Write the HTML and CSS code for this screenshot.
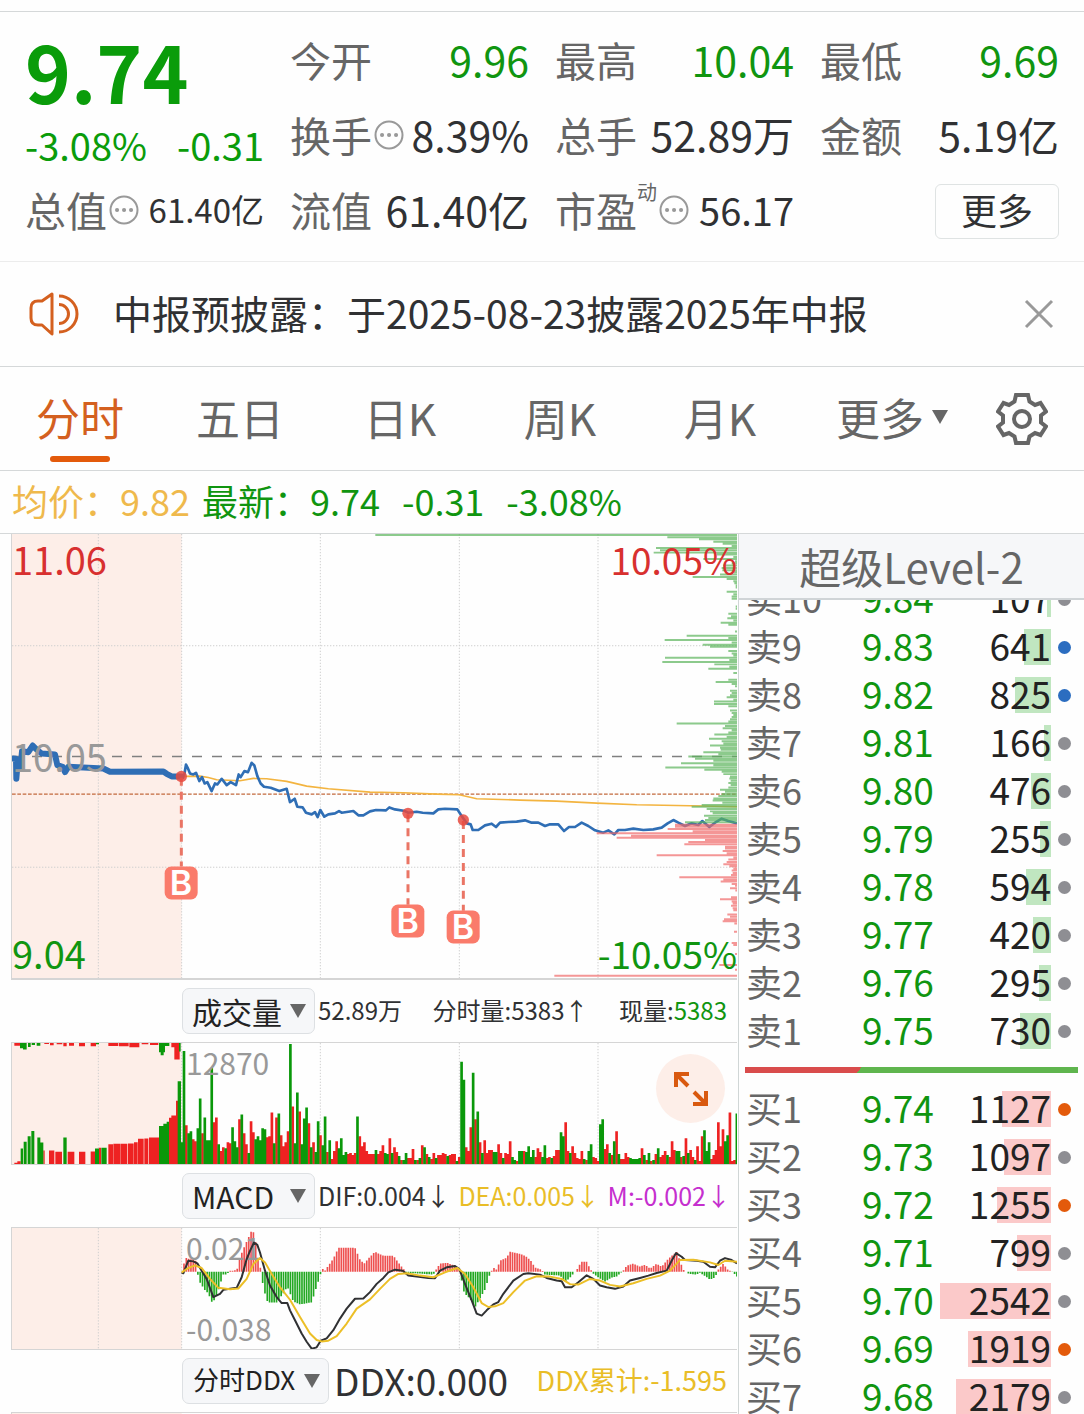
FILE: index.html
```html
<!DOCTYPE html>
<html lang="zh-CN">
<head>
    <meta charset="UTF-8">
    <meta name="viewport" content="width=device-width, initial-scale=1.0">
    <title>分时行情</title>
    <link rel="stylesheet" href="styles.css">
</head>
<body>
<main class="page">

    <section class="quote">
        <div class="last">
            <strong class="last-price">9.74</strong>
            <div class="last-change"><span>-3.08%</span><span>-0.31</span></div>
        </div>
        <div class="item"><span class="name">今开</span><span class="value down">9.96</span></div>
        <div class="item"><span class="name">最高</span><span class="value down">10.04</span></div>
        <div class="item"><span class="name">最低</span><span class="value down">9.69</span></div>
        <div class="item">
            <span class="name">换手</span>
            <svg class="tip" viewBox="0 0 30 30"><circle cx="15" cy="15" r="13.5"/><path d="M8 15h.1M15 15h.1M22 15h.1"/></svg>
            <span class="value">8.39%</span>
        </div>
        <div class="item"><span class="name">总手</span><span class="value">52.89万</span></div>
        <div class="item"><span class="name">金额</span><span class="value">5.19亿</span></div>
        <div class="item">
            <span class="name">总值</span>
            <svg class="tip" viewBox="0 0 30 30"><circle cx="15" cy="15" r="13.5"/><path d="M8 15h.1M15 15h.1M22 15h.1"/></svg>
            <span class="value small">61.40亿</span>
        </div>
        <div class="item"><span class="name">流值</span><span class="value">61.40亿</span></div>
        <div class="item">
            <span class="name">市盈<sup>动</sup></span>
            <svg class="tip" viewBox="0 0 30 30"><circle cx="15" cy="15" r="13.5"/><path d="M8 15h.1M15 15h.1M22 15h.1"/></svg>
            <span class="value medium">56.17</span>
        </div>
        <div class="item"><button class="more" type="button">更多</button></div>
    </section>

    <section class="notice">
        <svg class="speaker" viewBox="0 0 52 46">
            <path d="M23 3L13 10H9Q2 10 2 17V27Q2 34 9 34H13L23 43Z"/>
            <path d="M30 5A18 18 0 0 1 30 41M30 13.500A9.500 9.500 0 0 1 30 32.500"/>
        </svg>
        <p>中报预披露：于2025-08-23披露2025年中报</p>
        <button class="close" type="button" aria-label="关闭">
            <svg viewBox="0 0 30 30"><path d="M2 2L28 28M28 2L2 28"/></svg>
        </button>
    </section>

    <nav class="tabs">
        <button type="button" class="tab active">分时</button>
        <button type="button" class="tab">五日</button>
        <button type="button" class="tab">日K</button>
        <button type="button" class="tab">周K</button>
        <button type="button" class="tab">月K</button>
        <button type="button" class="tab tab-more">更多<svg class="caret" viewBox="0 0 16 14"><path d="M0 0H16L8 14Z"/></svg></button>
        <button type="button" class="settings" aria-label="设置">
            <svg viewBox="0 0 52 52">
                <path d="M20 2H32L33.500 8.500L39 12L44.500 10L50 18.500L45 22.500V29.500L50 33.500L44.500 42L39 40L33.500 43.500L32 50H20L18.500 43.500L13 40L7.500 42L2 33.500L7 29.500V22.500L2 18.500L7.500 10L13 12L18.500 8.500Z"/>
                <circle cx="26" cy="26" r="8"/>
            </svg>
        </button>
    </nav>

    <div class="summary">
        <span class="average">均价：9.82</span>
        <span>最新：9.74</span>
        <span>-0.31</span>
        <span>-3.08%</span>
    </div>

    <div class="board">
        <section class="charts">
            <div class="chart chart-price">
                <svg id="price" viewBox="36 12 2175 1335" preserveAspectRatio="none">
                    <rect class="preopen" x="36" y="12" width="509" height="1335"/>
                    <path class="grid" d="M295 12V1347M545 12V1347M961 12V1347M1378 12V1347M1794 12V1347M36 348H2211M36 1014H2211"/>
                    <path class="prev-close" d="M36 681H2211"/>
                    <path class="cost" d="M36 794H2211"/>
                    <polyline class="avg-line" points="545,741 600,740 625,744 650,751 720,754 760,747 800,748 860,756 920,770 985,778 1110,788 1210,790 1310,794 1378,796 1430,808 1560,812 1670,815 1790,821 1910,826 2070,829 2211,832"/>
                    <polyline class="price-line early" points="40,687 48,688 49,748 52,712 62,712 66,665 85,668 98,648 110,660 125,672 165,675 172,707 188,712 195,728 205,712 310,717 330,727 490,726 500,733 515,741 545,741"/>
                    <polyline class="price-line" points="545,741 553,735 558,705 563,715 570,732 580,735 588,730 598,755 606,743 614,762 622,758 635,785 645,762 652,765 665,748 680,767 692,758 708,767 716,735 722,743 733,725 744,728 755,700 763,708 772,740 782,762 792,772 812,775 838,785 860,778 870,818 884,808 892,832 908,834 918,850 935,855 945,848 953,863 961,842 973,862 985,855 1005,852 1017,845 1025,850 1060,845 1075,858 1090,858 1110,846 1128,842 1158,843 1168,834 1185,840 1215,845 1224,850 1250,847 1268,850 1300,852 1315,840 1335,838 1372,840 1385,860 1400,882 1412,885 1418,902 1435,902 1455,888 1475,883 1488,893 1500,880 1525,878 1550,877 1575,873 1595,880 1615,880 1635,890 1650,885 1675,885 1692,905 1707,893 1725,893 1745,880 1765,890 1785,903 1810,910 1825,903 1843,915 1855,902 1875,902 1900,898 1930,902 1960,900 1985,895 2003,882 2020,872 2035,880 2055,890 2075,882 2095,887 2107,875 2128,893 2145,880 2165,868 2185,875 2211,882"/>
                    <g class="trades">
                        <path d="M544 745V1012M1224 855V1127M1390 875V1145"/>
                        <circle cx="544" cy="741" r="17"/>
                        <circle cx="1224" cy="852" r="17"/>
                        <circle cx="1390" cy="872" r="17"/>
                        <rect x="494" y="1012" width="99" height="99" rx="20"/>
                        <rect x="1174" y="1126" width="99" height="99" rx="20"/>
                        <rect x="1340" y="1144" width="99" height="99" rx="20"/>
                        <text x="543" y="1098">B</text>
                        <text x="1223" y="1212">B</text>
                        <text x="1389" y="1230">B</text>
                    </g>
                </svg>
                <div class="scale">
                    <span class="up">11.06</span><span class="flat">10.05</span><span class="down">9.04</span>
                </div>
                <div class="scale scale-right">
                    <span class="up">10.05%</span><span class="down">-10.05%</span>
                </div>
            </div>

            <div class="bar">
                <label class="picker">
                    <select aria-label="成交量指标"><option>成交量</option></select>
                    <svg class="caret" viewBox="0 0 16 14"><path d="M0 0H16L8 14Z"/></svg>
                </label>
                <div class="stats">
                    <span>52.89万</span>
                    <span>分时量:5383↑</span>
                    <span>现量:<b class="down">5383</b></span>
                </div>
            </div>

            <div class="chart chart-sub">
                <svg id="volume" viewBox="36 186 2175 366" preserveAspectRatio="none">
                    <rect class="preopen" x="36" y="186" width="509" height="366"/>
                    <path class="grid" d="M295 186V552M545 186V552M961 186V552M1378 186V552M1794 186V552"/>
                </svg>
                <div class="scale scale-inner"><span class="flat">12870</span></div>
                <button class="expand" type="button" aria-label="放大">
                    <svg viewBox="0 0 34 34"><path d="M2 15V2H15M2 2L14 14M32 19V32H19M32 32L20 20"/></svg>
                </button>
            </div>

            <div class="bar">
                <label class="picker">
                    <select aria-label="MACD指标"><option>MACD</option></select>
                    <svg class="caret" viewBox="0 0 16 14"><path d="M0 0H16L8 14Z"/></svg>
                </label>
                <div class="stats stats-tight">
                    <span>DIF:0.004↓</span>
                    <span class="yellow">DEA:0.005↓</span>
                    <span class="purple">M:-0.002↓</span>
                </div>
            </div>

            <div class="chart chart-sub">
                <svg id="macd" viewBox="36 171 2175 366" preserveAspectRatio="none">
                    <rect class="preopen" x="36" y="171" width="509" height="366"/>
                    <path class="grid" d="M295 171V537M545 171V537M961 171V537M1378 171V537M1794 171V537"/>
                </svg>
                <div class="scale scale-inner"><span class="flat">0.021</span><span class="flat">-0.038</span></div>
                <svg class="over" viewBox="36 171 2175 366" preserveAspectRatio="none">
                    <polyline class="dif" points="545,305 550,308 565,270 580,272 592,278 605,300 620,325 640,380 660,370 670,358 690,355 710,352 725,320 740,265 750,240 762,215 772,222 780,245 795,300 810,345 830,380 845,398 862,398 870,420 885,450 905,490 920,515 935,536 950,532 962,512 980,505 1000,480 1020,445 1040,415 1065,385 1090,384 1110,365 1130,340 1150,322 1165,305 1185,297 1208,300 1225,315 1250,318 1285,322 1305,323 1320,300 1340,290 1365,286 1378,295 1395,340 1415,390 1430,430 1445,436 1460,420 1480,402 1495,395 1510,370 1540,330 1570,310 1585,308 1620,312 1640,322 1670,330 1685,332 1695,350 1715,350 1735,335 1760,314 1780,325 1800,345 1820,350 1845,355 1870,348 1890,330 1920,322 1945,315 1970,307 2000,300 2015,270 2028,247 2045,258 2055,268 2090,270 2110,273 2130,288 2145,290 2160,270 2175,262 2195,268 2211,278"/>
                    <polyline class="dea" points="545,305 565,292 585,284 605,292 630,325 655,352 690,356 715,354 740,325 760,280 780,262 795,275 815,310 840,350 870,388 900,440 930,490 950,510 965,514 985,512 1010,498 1040,460 1070,415 1110,387 1140,355 1170,325 1195,310 1220,308 1260,315 1300,320 1335,305 1372,292 1395,310 1420,350 1445,398 1465,410 1485,408 1510,398 1540,365 1575,330 1610,317 1650,318 1685,325 1710,341 1735,342 1770,325 1800,330 1830,343 1860,348 1900,338 1940,325 1980,315 2010,300 2040,268 2080,267 2130,275 2155,283 2175,270 2211,273"/>
                </svg>
            </div>

            <div class="bar">
                <label class="picker picker-wide">
                    <select aria-label="分时DDX指标"><option>分时DDX</option></select>
                    <svg class="caret" viewBox="0 0 16 14"><path d="M0 0H16L8 14Z"/></svg>
                </label>
                <div class="stats">
                    <span class="ddx">DDX:0.000</span>
                    <span class="ddx-sum yellow">DDX累计:-1.595</span>
                </div>
            </div>
            <div class="chart chart-sub">
                <svg viewBox="36 0 2175 366" preserveAspectRatio="none"><rect class="preopen" x="36" y="0" width="509" height="366"/></svg>
            </div>
        </section>

        <section class="book">
            <h2>超级Level-2</h2>
            <table class="asks">
                <tr><th>卖10</th><td>9.84</td><td><i style="width:4px"></i>107</td><td class="dot"></td></tr>
                <tr><th>卖9</th><td>9.83</td><td><i style="width:27px"></i>641</td><td class="dot blue"></td></tr>
                <tr><th>卖8</th><td>9.82</td><td><i style="width:36px"></i>825</td><td class="dot blue"></td></tr>
                <tr><th>卖7</th><td>9.81</td><td><i style="width:7px"></i>166</td><td class="dot"></td></tr>
                <tr><th>卖6</th><td>9.80</td><td><i style="width:20px"></i>476</td><td class="dot"></td></tr>
                <tr><th>卖5</th><td>9.79</td><td><i style="width:11px"></i>255</td><td class="dot"></td></tr>
                <tr><th>卖4</th><td>9.78</td><td><i style="width:25px"></i>594</td><td class="dot"></td></tr>
                <tr><th>卖3</th><td>9.77</td><td><i style="width:18px"></i>420</td><td class="dot"></td></tr>
                <tr><th>卖2</th><td>9.76</td><td><i style="width:12px"></i>295</td><td class="dot"></td></tr>
                <tr><th>卖1</th><td>9.75</td><td><i style="width:31px"></i>730</td><td class="dot"></td></tr>
            </table>
            <div class="ratio"></div>
            <table class="bids">
                <tr><th>买1</th><td>9.74</td><td><i style="width:49px"></i>1127</td><td class="dot orange"></td></tr>
                <tr><th>买2</th><td>9.73</td><td><i style="width:47px"></i>1097</td><td class="dot"></td></tr>
                <tr><th>买3</th><td>9.72</td><td><i style="width:54px"></i>1255</td><td class="dot orange"></td></tr>
                <tr><th>买4</th><td>9.71</td><td><i style="width:34px"></i>799</td><td class="dot"></td></tr>
                <tr><th>买5</th><td>9.70</td><td><i style="width:111px"></i>2542</td><td class="dot"></td></tr>
                <tr><th>买6</th><td>9.69</td><td><i style="width:83px"></i>1919</td><td class="dot orange"></td></tr>
                <tr><th>买7</th><td>9.68</td><td><i style="width:95px"></i>2179</td><td class="dot"></td></tr>
            </table>
        </section>
    </div>
</main>
<script src="charts.js"></script>
</body>
</html>
```
FILE: styles.css
```css
* {
    box-sizing: border-box;
}

body {
    margin: 0;
    background-color: #fefefe;
    color: #303133;
    font-family: "Noto Sans CJK SC", "Noto Sans", sans-serif;
}

button {
    padding: 0;
    border: none;
    background: none;
    color: inherit;
    font-family: inherit;
    cursor: pointer;
}

svg {
    display: block;
    fill: none;
}

.page {
    height: 100vh;
    padding-top: 11px;
    overflow: hidden;
}

.up {
    color: #d8302f;
}

.down {
    color: #109510;
}

.flat {
    color: #999;
}

.yellow {
    color: #e9bd27;
}

.purple {
    color: #c52fce;
}

/* quote header */
.quote {
    display: grid;
    grid-template-columns: repeat(4, minmax(0, 1fr));
    grid-auto-rows: 75px;
    column-gap: 26px;
    padding: 12px 25px;
    border-top: 1px solid #d5d8d9;
    border-bottom: 1px solid #ececec;
    font-size: 41px;
    white-space: nowrap;
}

.last {
    grid-row: span 2;
    color: #0a9c0a;
}

.last-price {
    display: block;
    font-size: 78px;
    line-height: 92px;
}

.last-change {
    display: flex;
    justify-content: space-between;
    font-size: 38px;
    line-height: 58px;
}

.item {
    display: flex;
    align-items: center;
    padding-bottom: 4px;
    line-height: 71px;
}

.name {
    color: #666;
}

.name sup {
    font-size: 20px;
    line-height: 20px;
    vertical-align: 27px;
}

.value {
    margin-left: auto;
}

.small {
    font-size: 33px;
}

.medium {
    font-size: 38px;
}

.tip {
    width: 30px;
    height: 30px;
    margin: 0 2px;
    stroke: #999;
    stroke-width: 2;
}

.tip path {
    stroke-width: 4;
    stroke-linecap: round;
}

.more {
    width: 124px;
    height: 55px;
    margin-top: 3px;
    margin-left: auto;
    padding-bottom: 4px;
    border: 1px solid #dfe3e3;
    border-radius: 6px;
    font-size: 36px;
    line-height: 48px;
}

/* notice */
.notice {
    display: flex;
    align-items: center;
    height: 105px;
    padding: 0 30px 0 29px;
    border-bottom: 1px solid #d5d8d9;
    font-size: 39px;
}

.notice p {
    flex: 1;
    margin: 0 0 0 32px;
    padding-bottom: 5px;
    line-height: 60px;
}

.speaker {
    width: 52px;
    height: 46px;
    stroke: #d4601f;
    stroke-width: 3;
    stroke-linejoin: round;
}

.close svg {
    width: 30px;
    height: 30px;
    stroke: #999;
    stroke-width: 3;
}

/* period tabs */
.tabs {
    display: grid;
    grid-template-columns: repeat(6, minmax(0, 160fr)) minmax(0, 124fr);
    height: 104px;
    border-bottom: 1px solid #d5d8d9;
    color: #666;
}

.tab {
    position: relative;
    padding-bottom: 4px;
    font-size: 44px;
    line-height: 64px;
}

.tab.active {
    color: #d4601f;
}

.tab.active::after {
    content: "";
    position: absolute;
    left: 50%;
    bottom: 8px;
    width: 60px;
    height: 6px;
    margin-left: -30px;
    border-radius: 3px;
    background-color: #e35a0b;
}

.tab-more {
    display: flex;
    align-items: center;
    justify-content: center;
    gap: 8px;
    padding-left: 24px;
}

.caret {
    width: 16px;
    height: 14px;
    fill: #666;
}

.settings svg {
    width: 52px;
    height: 52px;
    margin: 0 auto;
    stroke: #666;
    stroke-width: 4;
}

.summary {
    display: flex;
    gap: 22px;
    padding: 0 12px 4px;
    border-bottom: 1px solid #d5d8d9;
    color: #109510;
    font-size: 36px;
    line-height: 58px;
}

.average {
    margin-right: -10px;
    color: #efb94c;
}

/* charts on the left, order book on the right */
.board {
    display: grid;
    grid-template-columns: minmax(0, 739fr) minmax(0, 345fr);
}

.charts {
    padding: 0 1px 0 11px;
    border-right: 1px solid #d0d6d6;
}

.chart {
    position: relative;
    border-left: 1px solid #d5d5d5;
    border-bottom: 1px solid #d5d5d5;
}

.chart svg {
    width: 100%;
    height: 100%;
}

.chart-price {
    height: 446px;
    border-bottom-width: 2px;
}

.chart-sub {
    height: 123px;
    border-top: 1px solid #d5d5d5;
}

.preopen {
    fill: #fdeee8;
}

.grid {
    stroke: #cfcfcf;
    stroke-width: 3;
    stroke-dasharray: 4 5;
}

.prev-close {
    stroke: #808080;
    stroke-width: 5;
    stroke-dasharray: 30 30;
}

.cost {
    stroke: #c2693c;
    stroke-width: 4;
    stroke-dasharray: 11 5;
}

.avg-line {
    stroke: #f3b440;
    stroke-width: 5;
}

.price-line {
    stroke: #2f6eb5;
    stroke-width: 8;
    stroke-linejoin: round;
}

.price-line.early {
    stroke-width: 18;
    stroke-linecap: round;
}

.trades path {
    stroke: #ea7565;
    stroke-width: 9;
    stroke-dasharray: 24 18;
}

.trades circle {
    fill: #e84a3f;
    opacity: 0.85;
}

.trades rect {
    fill: #fa7b6b;
}

.trades text {
    fill: #fff;
    font-family: Inter, sans-serif;
    font-size: 102px;
    font-weight: 600;
    text-anchor: middle;
}

.depth {
    stroke-width: 6;
    opacity: 0.7;
}

.depth.sell {
    stroke: #5bb45b;
}

.depth.buy {
    stroke: #ef6a6a;
}

.vol-up {
    fill: #ee2222;
}

.vol-down {
    fill: #0a980a;
}

.macd-up,
.macd-down {
    stroke-width: 5;
    stroke: #ee5050;
}

.macd-down {
    stroke: #22a822;
}

.dif,
.dea {
    stroke: #303133;
    stroke-width: 6;
    stroke-linejoin: round;
}

.dea {
    stroke: #ecbf27;
}

.over {
    position: absolute;
    inset: 0;
}

.scale {
    position: absolute;
    inset: 0;
    display: flex;
    flex-direction: column;
    justify-content: space-between;
    font-size: 38px;
    line-height: 50px;
}

.scale-right {
    font-size: 37px;
    text-align: right;
}

.scale-inner {
    left: 24%;
    padding-bottom: 2px;
    font-size: 30px;
    line-height: 38px;
}

.expand {
    position: absolute;
    top: 11px;
    right: 12px;
    width: 69px;
    height: 69px;
    border-radius: 50%;
    background-color: #fdeee8;
}

.expand svg {
    width: 34px;
    height: 34px;
    margin: 0 auto;
    stroke: #d9590f;
    stroke-width: 4;
}

.bar {
    display: flex;
    align-items: center;
    height: 62px;
    padding-left: 171px;
}

.picker {
    position: relative;
    flex: none;
    width: 133px;
}

.picker select {
    display: block;
    width: 100%;
    height: 46px;
    padding: 0 0 6px 9px;
    border: 1px solid #dde0e3;
    border-radius: 7px;
    background-color: #f6f7f9;
    color: #222;
    font-family: inherit;
    font-size: 30px;
    appearance: none;
}

.picker .caret {
    position: absolute;
    top: 16px;
    right: 9px;
    pointer-events: none;
}

.picker-wide {
    width: 147px;
}

.picker-wide select {
    padding-left: 10px;
    font-size: 26px;
}

.stats {
    flex: 1;
    display: flex;
    align-items: center;
    justify-content: space-between;
    padding: 0 10px 2px 3px;
    font-size: 24px;
    line-height: 44px;
    white-space: nowrap;
}

.stats b {
    font-weight: normal;
}

.stats-tight {
    padding-right: 6px;
    font-size: 25px;
}

.ddx {
    padding-left: 2px;
    font-size: 37px;
}

.ddx-sum {
    font-size: 27px;
}

/* order book */
.book h2 {
    position: relative;
    z-index: 1;
    height: 66px;
    margin: 0 0 -25px;
    border-bottom: 2px solid #d0d4d7;
    background-color: #f6f7f9;
    color: #666;
    font-size: 42px;
    font-weight: normal;
    line-height: 64px;
    text-align: center;
}

.book table {
    width: 100%;
    table-layout: fixed;
    border-collapse: collapse;
    font-size: 37px;
    line-height: 45px;
}

.book th,
.book td {
    height: 48px;
    padding: 0;
    vertical-align: top;
    white-space: nowrap;
}

.book th {
    width: 31%;
    padding-left: 7px;
    color: #666;
    font-size: 36px;
    font-weight: normal;
    text-align: left;
}

.book td:nth-child(2) {
    width: 26%;
    padding-left: 16px;
    color: #109510;
}

.book td:nth-child(3) {
    position: relative;
    color: #222;
    text-align: right;
}

.book td.dot {
    width: 33px;
    padding-left: 7px;
    vertical-align: middle;
}

.dot::before {
    content: "";
    display: block;
    width: 13px;
    height: 13px;
    border-radius: 50%;
    background-color: #8e8e93;
}

.dot.blue::before {
    background-color: #2b6dc0;
}

.dot.orange::before {
    background-color: #e35a0b;
}

.book i {
    position: absolute;
    top: 6px;
    right: 0;
    z-index: -1;
    height: 36px;
    background-color: #c0e6c0;
}

.bids i {
    background-color: #fbc9c9;
}

.ratio {
    height: 6px;
    margin: 12px 6px;
    background: linear-gradient(130deg, #d94c4c 34.500%, #5fb54e 34.500%);
}
```
FILE: charts.js
```js
const NS = 'http://www.w3.org/2000/svg';

function addPath(svg, cls, d) {
    const path = document.createElementNS(NS, 'path');
    path.setAttribute('class', cls);
    path.setAttribute('d', d);
    svg.appendChild(path);
}

// depth bars: y and left end of each price level, drawn up to the right edge
const sell = '15:16 22:892 28:987 35:1030 41:1058 48:1085 54:858 61:870 68:851 74:1040 81:1090 87:1000 94:1095 100:1085 107:1060 114:1055 121:1057 127:1092 134:1050 141:968 147:1070 154:1090 160:1093 167:1097 173:1097 186:1070 193:1090 200:1085 207:1085 230:1097 237:1097 252:1075 259:1083 265:1072 272:1090 279:1052 285:1075 305:1095 318:950 325:1075 331:884 338:1085 345:998 351:1020 364:1075 371:1085 377:1090 384:885 391:1078 397:877 404:1033 411:1078 417:1015 430:1090 450:1075 457:1037 463:1085 470:1095 483:1080 490:1085 497:1080 503:1070 510:1090 516:1032 523:1032 530:1075 543:1080 550:1085 556:1090 562:1085 569:1080 576:1075 582:920 589:1065 596:1058 602:1085 609:1075 615:1033 622:1070 628:1017 635:1055 642:1060 648:1020 655:1050 661:1052 668:1000 674:1045 681:955 688:975 694:1030 701:933 707:1030 714:886 721:1003 727:1055 734:1060 741:1080 747:1078 754:1082 761:1075 767:1082 774:1075 781:1050 787:1065 794:1055 800:1045 807:1030 813:1028 820:1057 827:995 832:965 839:1010 846:1020 852:1028 859:1002 866:1015 872:1005 879:945';
const buy = '886:915 892:915 899:893 906:968 912:680 919:783 925:740 932:1005 938:955 945:943 952:1065 958:1065 965:1058 972:1070 978:860 985:1090 991:1075 998:1070 1005:1060 1011:1078 1018:1090 1024:1085 1031:1088 1037:1083 1044:928 1051:1060 1057:1052 1064:1085 1070:1095 1077:1080 1084:1096 1104:1083 1110:1050 1117:1085 1123:1088 1130:1083 1137:1088 1143:1090 1156:1072 1163:1080 1170:1062 1176:1058 1183:1093 1208:1092 1242:1085 1248:1090 1275:1095 1308:1048 1322:1095 1340:553';

function depth(list) {
    return list.split(' ').map(p => {
        const [y, x] = p.split(':').map(Number);
        return `M${x + 1110} ${y}H2211`;
    }).join('');
}

const price = document.getElementById('price');
addPath(price, 'depth sell', depth(sell));
addPath(price, 'depth buy', depth(buy));

// call auction volume: colour, left, right, height
const auction = 'r43-52:4 r52-62:8 g62-69:47 g71-80:67 g83-92:84 g94-103:100 g112-121:80 g121-130:65 r130-134:41 r147-163:41 r166-186:37 g190-200:80 r203-223:37 r237-256:37 r272-285:38 g285-297:47 r297-303:49 g304-320:49 r325-339:60 r340-360:61 r361-382:61 r384-401:62 r402-413:66 r414-431:76 r433-445:77 r447-477:80 g477-490:115 g490-500:122 g500-507:128 r507-514:140 r514-528:147 r528-534:191 g533-543:250';
const unmatched = 'r43-60:8 g60-69:16 g69-80:20 g84-92:12 g95-105:6 g110-121:8 r133-147:3 r150-161:7 r170-187:4 r190-200:10 r207-222:8 r237-255:10 r272-288:10 g288-297:4 r325-355:9 r357-386:10 r388-418:13 r425-445:4 r450-475:6 g477-495:28 g482-491:37 g495-508:9 r514-524:13 r523-539:50 g537-542:26';
// one bar per minute
const minutes = 'g22 g114 r39 g31 g33 r25 r23 g36 g66 r31 g47 g24 g24 g97 r42 r47 g20 r13 r17 g16 r22 r21 g37 g23 g17 r45 g50 r31 r20 g11 r43 r32 g25 g28 g24 g36 g35 r27 r28 r52 g21 r47 g51 r29 r18 r22 r33 g121 r58 g21 g72 r53 g20 g46 g57 r41 g17 r22 g12 g43 r29 g19 g48 r12 g24 r5 r13 r23 g16 g26 g9 g12 r10 r11 r9 r11 g48 r28 r18 r22 r13 r10 ' +
    'r10 r10 g14 r10 r13 r19 g11 g10 r26 g11 r17 r12 g8 r4 g4 g11 r6 r6 r15 g4 r4 g6 r19 g17 r10 g7 r5 r11 g6 r9 r9 r11 r10 g8 r9 r10 r10 g3 r7 g103 g85 r17 r13 r37 g92 r45 g53 r22 g11 r24 r11 r14 r14 g12 g12 r20 r11 g6 r11 r10 r23 g7 g4 r3 g13 g13 r13 g12 g18 g7 g14 r7 r16 r12 g7 g19 r6 r7 g6 r8 r14 r14 g32 g28 r42 r13 g11 r18 r11 r6 r5 r13 g5 r4 g13 g20 r7 r6 r3 ' +
    'g40 g45 r15 r20 g11 r9 g23 r33 g10 r5 r5 r11 r7 g6 g5 g5 g5 g6 r16 g9 r4 g11 r3 g4 r10 g16 r7 r9 r13 g9 r7 r23 r14 g13 g13 r7 g8 r26 g11 r14 r7 g4 r18 r3 r28 g34 g13 g22 r5 r9 r14 r42 r18 r35 g23 g29 r52 r3 r4 g51';

const vol = { r: '', g: '' };
auction.split(' ').forEach(b => {
    const [x1, x2, h] = b.slice(1).split(/[-:]/).map(Number);
    vol[b[0]] += `M${x1} 552V${552 - h}H${x2}V552Z`;
});
unmatched.split(' ').forEach(b => {
    const [x1, x2, h] = b.slice(1).split(/[-:]/).map(Number);
    vol[b[0]] += `M${x1} 186V${186 + h}H${x2}V186Z`;
});
const step = 6.94;
minutes.split(' ').forEach((b, i) => {
    const x = 541 + i * step;
    vol[b[0]] += `M${x} 552V${552 - b.slice(1) * 3}H${x + 8}V552Z`;
});
const volume = document.getElementById('volume');
addPath(volume, 'vol-up', vol.r);
addPath(volume, 'vol-down', vol.g);

// MACD histogram: turning points, bars are interpolated between them
const hist = [[545,0],[557,14],[587,11],[594,-4],[600,-11],[613,-18],[625,-22],[636,-31],[645,-28],[660,-14],[668,-3],[680,-3],[690,1],[703,1],[712,3],[718,13],[733,25],[745,34],[757,43],[765,35],[775,10],[782,3],[786,-8],[793,-20],[803,-31],[830,-31],[850,-22],[862,-15],[880,-30],[900,-33],[935,-31],[950,-15],[961,-3],[967,3],[975,1],[985,6],[1000,13],[1015,24],[1065,24],[1080,12],[1092,8],[1110,15],[1125,20],[1150,16],[1180,16],[1200,7],[1210,3],[1218,-1],[1260,-2],[1300,-3],[1308,2],[1320,8],[1340,9],[1365,6],[1378,2],[1383,-6],[1393,-22],[1410,-27],[1425,-36],[1435,-30],[1455,-18],[1470,-2],[1480,4],[1490,2],[1500,11],[1520,14],[1530,20],[1560,18],[1580,15],[1595,10],[1605,4],[1625,2],[1635,-3],[1680,-4],[1697,-10],[1710,-6],[1720,-2],[1733,3],[1743,10],[1760,10],[1770,3],[1780,-2],[1800,-7],[1815,-10],[1835,-6],[1850,-5],[1870,1],[1880,6],[1900,8],[1920,5],[1935,7],[1950,3],[1970,8],[1985,5],[2005,13],[2030,20],[2043,8],[2050,2],[2065,-2],[2090,-3],[2100,-1],[2130,-8],[2145,-6],[2155,2],[2170,8],[2183,2],[2200,-1],[2211,-5]];
const bars = { up: '', down: '' };
for (let x = 552, k = 0; x <= 2211; x += step) {
    while (hist[k + 1][0] < x) k++;
    const [x1, h1] = hist[k];
    const [x2, h2] = hist[k + 1];
    const h = h1 + (h2 - h1) * (x - x1) / (x2 - x1);
    bars[h > 0 ? 'up' : 'down'] += `M${x} 303V${303 - h * 3}`;
}
const macd = document.getElementById('macd');
addPath(macd, 'macd-up', bars.up);
addPath(macd, 'macd-down', bars.down);
```
